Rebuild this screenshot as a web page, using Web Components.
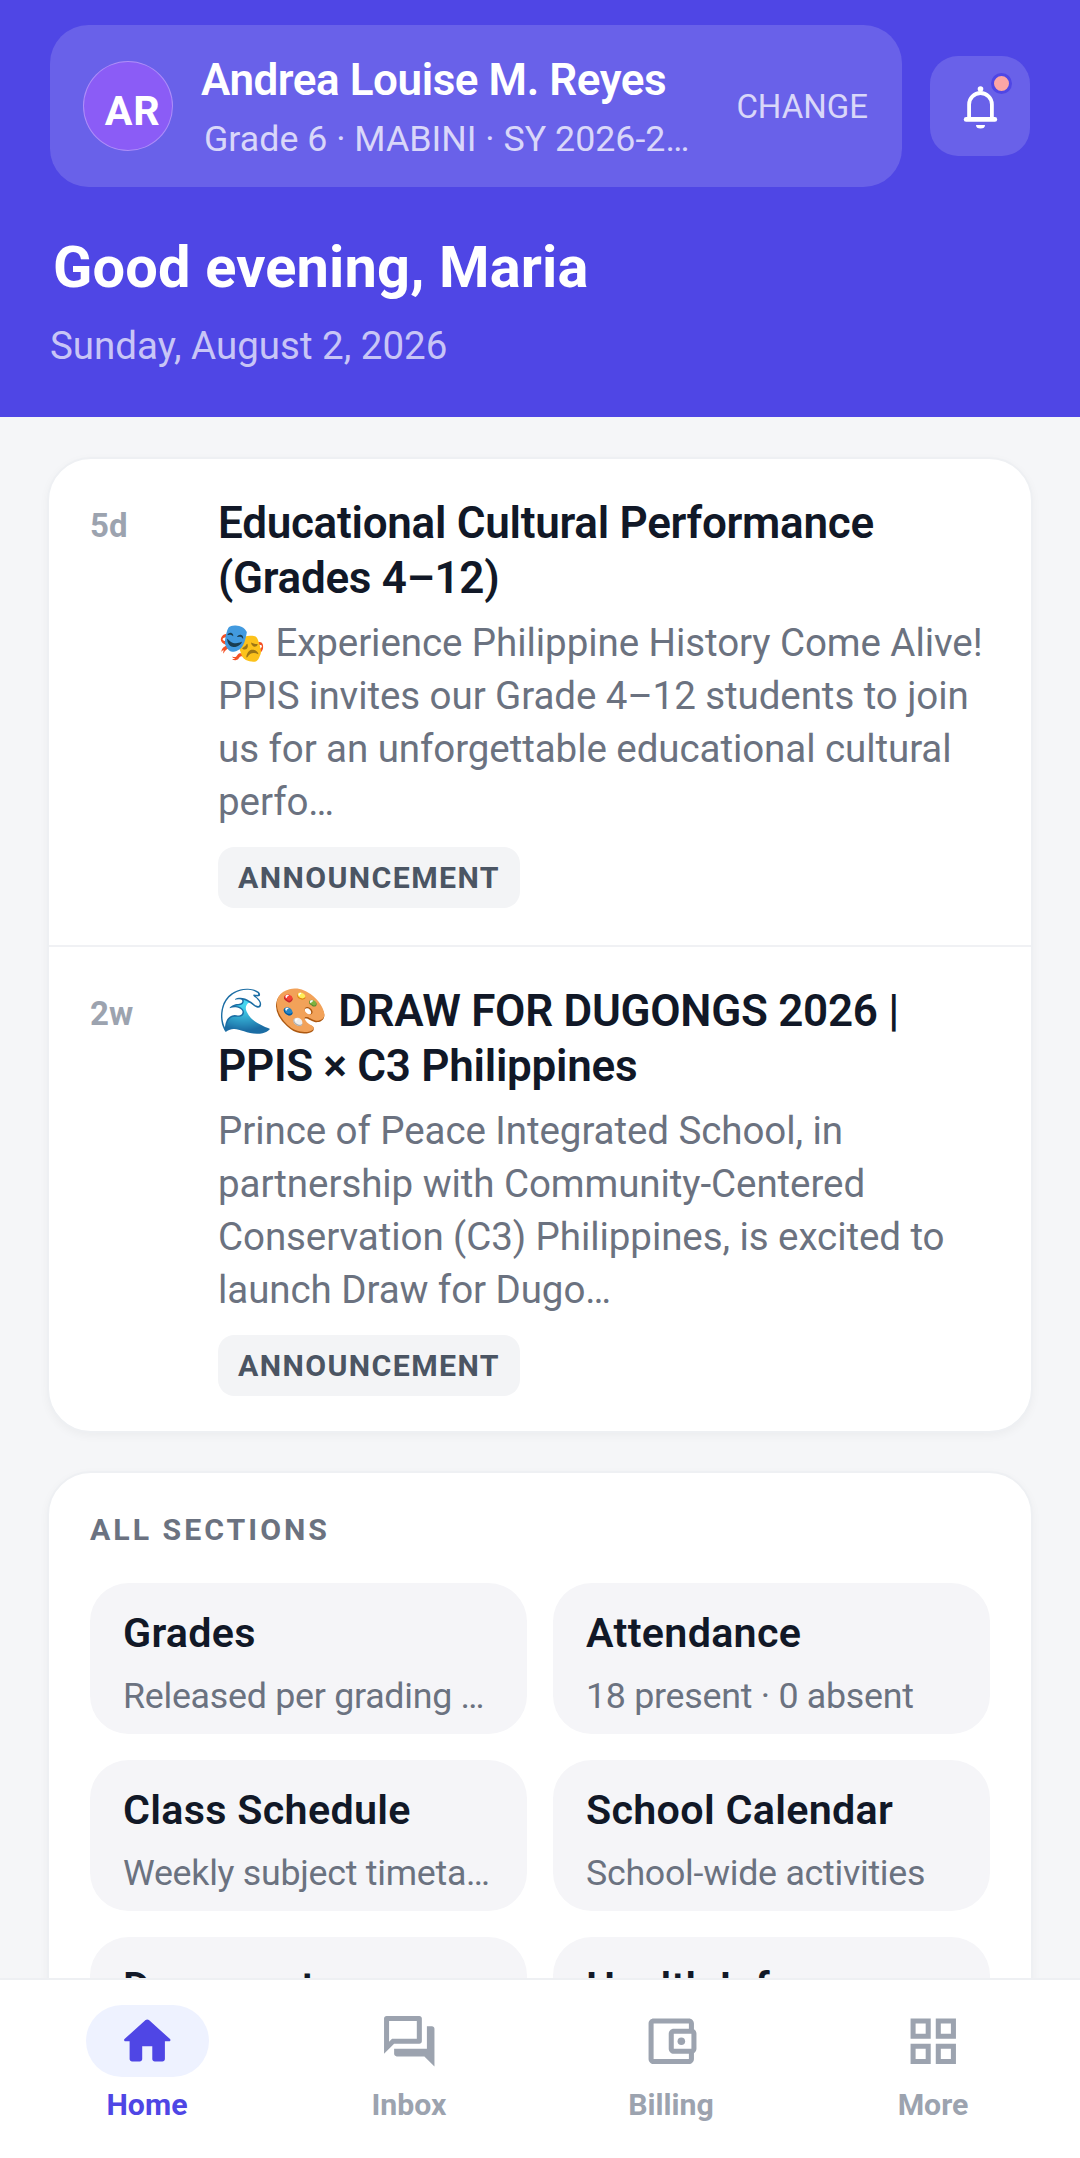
<!DOCTYPE html>
<html>
<head>
<meta charset="utf-8">
<title>Home</title>
<style>
  html, body { margin: 0; padding: 0; height: 100%; }
  body { font-family: Roboto, "Noto Sans", sans-serif; background: #f5f6f8; overflow: hidden; }
  parent-app { height: 2158px; }
</style>
</head>
<body>
<parent-app>
  <app-header slot="header" greeting="Good evening, Maria" date="Sunday, August 2, 2026">
    <child-switcher initials="AR" name="Andrea Louise M. Reyes" meta="Grade 6 · MABINI · SY 2026-2027"></child-switcher>
    <notify-button></notify-button>
  </app-header>

  <feed-card>
    <feed-item age="5d" title="Educational Cultural Performance (Grades 4–12)" tag="ANNOUNCEMENT">🎭 Experience Philippine History Come Alive! PPIS invites our Grade 4–12 students to join us for an unforgettable educational cultural perfo…</feed-item>
    <feed-item age="2w" title="🌊🎨 DRAW FOR DUGONGS 2026 | PPIS × C3 Philippines" tag="ANNOUNCEMENT">Prince of Peace Integrated School, in partnership with Community-Centered Conservation (C3) Philippines, is excited to launch Draw for Dugo…</feed-item>
  </feed-card>

  <section-card heading="ALL SECTIONS">
    <section-tile title="Grades" sub="Released per grading period"></section-tile>
    <section-tile title="Attendance" sub="18 present · 0 absent"></section-tile>
    <section-tile title="Class Schedule" sub="Weekly subject timetable"></section-tile>
    <section-tile title="School Calendar" sub="School-wide activities"></section-tile>
    <section-tile title="Documents" sub="Requests and records"></section-tile>
    <section-tile title="Health Info" sub="Clinic and medical notes"></section-tile>
  </section-card>

  <bottom-nav slot="nav">
    <nav-item label="Home" icon="home" active></nav-item>
    <nav-item label="Inbox" icon="inbox"></nav-item>
    <nav-item label="Billing" icon="billing"></nav-item>
    <nav-item label="More" icon="more"></nav-item>
  </bottom-nav>
</parent-app>

<script>
const ICONS = {
  home: '<path d="M10 19v-5h4v5c0 .55.45 1 1 1h3c.55 0 1-.45 1-1v-7h1.7c.46 0 .68-.57.33-.87L12.67 3.6c-.38-.34-.96-.34-1.34 0l-8.36 7.53c-.34.3-.13.87.33.87H5v7c0 .55.45 1 1 1h3c.55 0 1-.45 1-1z"/>',
  inbox: '<path d="M15 4v7H5.17L4 12.17V4h11m1-2H3c-.55 0-1 .45-1 1v14l4-4h10c.55 0 1-.45 1-1V3c0-.55-.45-1-1-1zm5 4h-2v9H6v2c0 .55.45 1 1 1h11l4 4V7c0-.55-.45-1-1-1z"/>',
  billing: '<path d="M21 7.28V5c0-1.1-.9-2-2-2H5c-1.11 0-2 .9-2 2v14c0 1.1.89 2 2 2h14c1.1 0 2-.9 2-2v-2.28c.59-.35 1-.98 1-1.72V9c0-.74-.41-1.37-1-1.72zM20 9v6h-7V9h7zM5 19V5h14v2h-6c-1.1 0-2 .9-2 2v6c0 1.1.9 2 2 2h6v2H5z"/><circle cx="16" cy="12" r="1.5"/>',
  more: '<path d="M3 3v8h8V3H3zm6 6H5V5h4v4zm-6 4v8h8v-8H3zm6 6H5v-4h4v4zm4-16v8h8V3h-8zm6 6h-4V5h4v4zm-6 4v8h8v-8h-8zm6 6h-4v-4h4v4z"/>'
};

class ParentApp extends HTMLElement {
  connectedCallback() {
    this.attachShadow({ mode: 'open' });
    this.shadowRoot.innerHTML = `
      <style>
        :host { display: flex; flex-direction: column; overflow: hidden; }
        main {
          flex: 1;
          min-height: 0;
          overflow: hidden;
          display: flex;
          flex-direction: column;
          gap: 38.5px;
          padding: 40px 47px 0;
        }
      </style>
      <slot name="header"></slot>
      <main><slot></slot></main>
      <slot name="nav"></slot>
    `;
  }
}

class AppHeader extends HTMLElement {
  connectedCallback() {
    this.attachShadow({ mode: 'open' });
    this.shadowRoot.innerHTML = `
      <style>
        :host { display: block; flex: none; height: 417px; box-sizing: border-box; background: #4f46e5; padding: 25px 50px 0; color: #fff; }
        .top { display: flex; align-items: center; gap: 28px; }
        h1 { margin: 44px 0 0 3px; font-size: 57.75px; line-height: 72px; font-weight: 700; letter-spacing: .15px; }
        p { margin: 19px 0 0; font-size: 38.5px; line-height: 48px; color: rgba(255,255,255,.7); }
      </style>
      <div class="top"><slot></slot></div>
      <h1>${this.getAttribute('greeting')}</h1>
      <p>${this.getAttribute('date')}</p>
    `;
  }
}

class ChildSwitcher extends HTMLElement {
  connectedCallback() {
    this.attachShadow({ mode: 'open' });
    this.shadowRoot.innerHTML = `
      <style>
        :host { display: flex; flex: 1; min-width: 0; height: 162px; box-sizing: border-box; align-items: center; gap: 28px; padding: 0 34px 0 33px; border-radius: 38.5px; background: rgba(255,255,255,.15); }
        .avatar { flex: none; width: 90px; height: 90px; box-sizing: border-box; padding: 9px 0 0 9px; border-radius: 50%; background: #8b5cf6; border: 1px solid rgba(255,255,255,.3); display: flex; align-items: center; justify-content: center; font-size: 41.25px; font-weight: 700; letter-spacing: .8px; color: #fff; }
        .info { flex: 1; min-width: 0; margin-right: 12px; padding-top: 2px; }
        .name { font-size: 44px; line-height: 52px; font-weight: 600; letter-spacing: -.44px; color: #fff; white-space: nowrap; overflow: hidden; text-overflow: ellipsis; }
        .meta { margin: 11px 0 0 3px; font-size: 35.75px; line-height: 44px; color: rgba(255,255,255,.75); white-space: nowrap; overflow: hidden; text-overflow: ellipsis; }
        .change { flex: none; font-size: 33px; color: rgba(255,255,255,.75); }
      </style>
      <div class="avatar">${this.getAttribute('initials')}</div>
      <div class="info">
        <div class="name">${this.getAttribute('name')}</div>
        <div class="meta">${this.getAttribute('meta')}</div>
      </div>
      <div class="change">CHANGE</div>
    `;
  }
}

class NotifyButton extends HTMLElement {
  connectedCallback() {
    this.attachShadow({ mode: 'open' });
    this.shadowRoot.innerHTML = `
      <style>
        :host { display: flex; flex: none; position: relative; width: 100px; height: 100px; border-radius: 28px; background: rgba(255,255,255,.15); align-items: center; justify-content: center; }
        svg { width: 55px; height: 55px; display: block; }
        .dot { position: absolute; top: 17px; right: 18px; width: 15px; height: 15px; border-radius: 50%; background: #fca5a5; border: 3.5px solid #4f46e5; }
      </style>
      <svg viewBox="0 0 55 55" fill="none" stroke="#fff">
        <path stroke-width="3.8" d="M16.1 40V25.4a11.4 11.4 0 0 1 22.8 0V40"/>
        <path stroke-width="4.6" stroke-linecap="round" d="M13.1 40.4h28.8"/>
        <circle cx="27.5" cy="10" r="2.8" fill="#fff" stroke="none"/>
        <path fill="#fff" stroke="none" d="M23 46h9a4.5 3.5 0 0 1-9 0z"/>
      </svg>
      <span class="dot"></span>
    `;
  }
}

class FeedCard extends HTMLElement {
  connectedCallback() {
    this.attachShadow({ mode: 'open' });
    this.shadowRoot.innerHTML = `
      <style>
        :host { display: block; flex: none; background: #fff; border: 2.75px solid #eef0f3; border-radius: 44px; box-shadow: 0 3px 10px rgba(0,0,0,.04); overflow: hidden; }
        ::slotted(feed-item:not(:last-child)) { border-bottom: 2.75px solid #f0f1f4; }
      </style>
      <slot></slot>
    `;
  }
}

class FeedItem extends HTMLElement {
  connectedCallback() {
    this.attachShadow({ mode: 'open' });
    this.shadowRoot.innerHTML = `
      <style>
        :host { display: flex; gap: 0; padding: 36.5px 41px 37px 41px; }
        :host(:last-child) { padding-bottom: 34.5px; }
        .age { flex: none; width: 128px; font-size: 33px; line-height: 60px; font-weight: 700; color: #9ca3af; }
        .body { flex: 1; min-width: 0; }
        h3 { margin: 0; font-size: 44px; line-height: 55.5px; font-weight: 600; letter-spacing: -.27px; color: #111827; }
        p { margin: 9px 0 0; font-size: 38.5px; line-height: 53px; letter-spacing: -.07px; color: #6b7280; }
        .tag { display: block; width: fit-content; margin-top: 19.5px; padding: 0 20px; height: 61px; line-height: 61px; border-radius: 16.5px; background: #f3f4f6; color: #4b5563; font-size: 30.25px; font-weight: 700; letter-spacing: 1.4px; }
      </style>
      <div class="age">${this.getAttribute('age')}</div>
      <div class="body">
        <h3>${this.getAttribute('title')}</h3>
        <p><slot></slot></p>
        <span class="tag">${this.getAttribute('tag')}</span>
      </div>
    `;
  }
}

class SectionCard extends HTMLElement {
  connectedCallback() {
    this.attachShadow({ mode: 'open' });
    this.shadowRoot.innerHTML = `
      <style>
        :host { display: block; flex: none; background: #fff; border: 2.75px solid #eef0f3; border-radius: 44px; box-shadow: 0 3px 10px rgba(0,0,0,.04); padding: 37px 41px 40px; }
        h2 { margin: 0 0 33px; font-size: 30.25px; line-height: 40px; font-weight: 700; color: #6b7280; letter-spacing: 3px; }
        .grid { display: grid; grid-template-columns: 1fr 1fr; gap: 26px; }
      </style>
      <h2>${this.getAttribute('heading')}</h2>
      <div class="grid"><slot></slot></div>
    `;
  }
}

class SectionTile extends HTMLElement {
  connectedCallback() {
    this.attachShadow({ mode: 'open' });
    this.shadowRoot.innerHTML = `
      <style>
        :host { display: block; min-width: 0; height: 151px; box-sizing: border-box; padding: 25px 33px 0; border-radius: 38.5px; background: #f5f5f8; }
        .t { font-size: 41.25px; line-height: 50px; font-weight: 600; letter-spacing: .3px; color: #111827; white-space: nowrap; overflow: hidden; text-overflow: ellipsis; }
        .s { margin-top: 16px; font-size: 35.75px; line-height: 44px; letter-spacing: -.26px; color: #6b7280; white-space: nowrap; overflow: hidden; text-overflow: ellipsis; }
      </style>
      <div class="t">${this.getAttribute('title')}</div>
      <div class="s">${this.getAttribute('sub')}</div>
    `;
  }
}

class BottomNav extends HTMLElement {
  connectedCallback() {
    this.attachShadow({ mode: 'open' });
    this.shadowRoot.innerHTML = `
      <style>
        :host { display: grid; flex: none; grid-template-columns: repeat(4, 1fr); height: 180px; box-sizing: border-box; padding: 25px 16px 0; background: #fff; border-top: 2.75px solid #eef0f3; position: relative; }
      </style>
      <slot></slot>
    `;
  }
}

class NavItem extends HTMLElement {
  connectedCallback() {
    const active = this.hasAttribute('active');
    this.attachShadow({ mode: 'open' });
    this.shadowRoot.innerHTML = `
      <style>
        :host { display: flex; flex-direction: column; align-items: center; color: ${active ? '#4f46e5' : '#9ca3af'}; }
        .pill { width: 123px; height: 72px; border-radius: 36px; display: flex; align-items: center; justify-content: center; background: ${active ? '#eef2ff' : 'transparent'}; }
        svg { width: 60.5px; height: 60.5px; fill: currentColor; display: block; }
        span { margin-top: 8px; font-size: 30.25px; line-height: 40px; font-weight: 700; }
      </style>
      <div class="pill"><svg viewBox="0 0 24 24">${ICONS[this.getAttribute('icon')]}</svg></div>
      <span>${this.getAttribute('label')}</span>
    `;
  }
}

customElements.define('parent-app', ParentApp);
customElements.define('app-header', AppHeader);
customElements.define('child-switcher', ChildSwitcher);
customElements.define('notify-button', NotifyButton);
customElements.define('feed-card', FeedCard);
customElements.define('feed-item', FeedItem);
customElements.define('section-card', SectionCard);
customElements.define('section-tile', SectionTile);
customElements.define('bottom-nav', BottomNav);
customElements.define('nav-item', NavItem);
</script>
</body>
</html>
